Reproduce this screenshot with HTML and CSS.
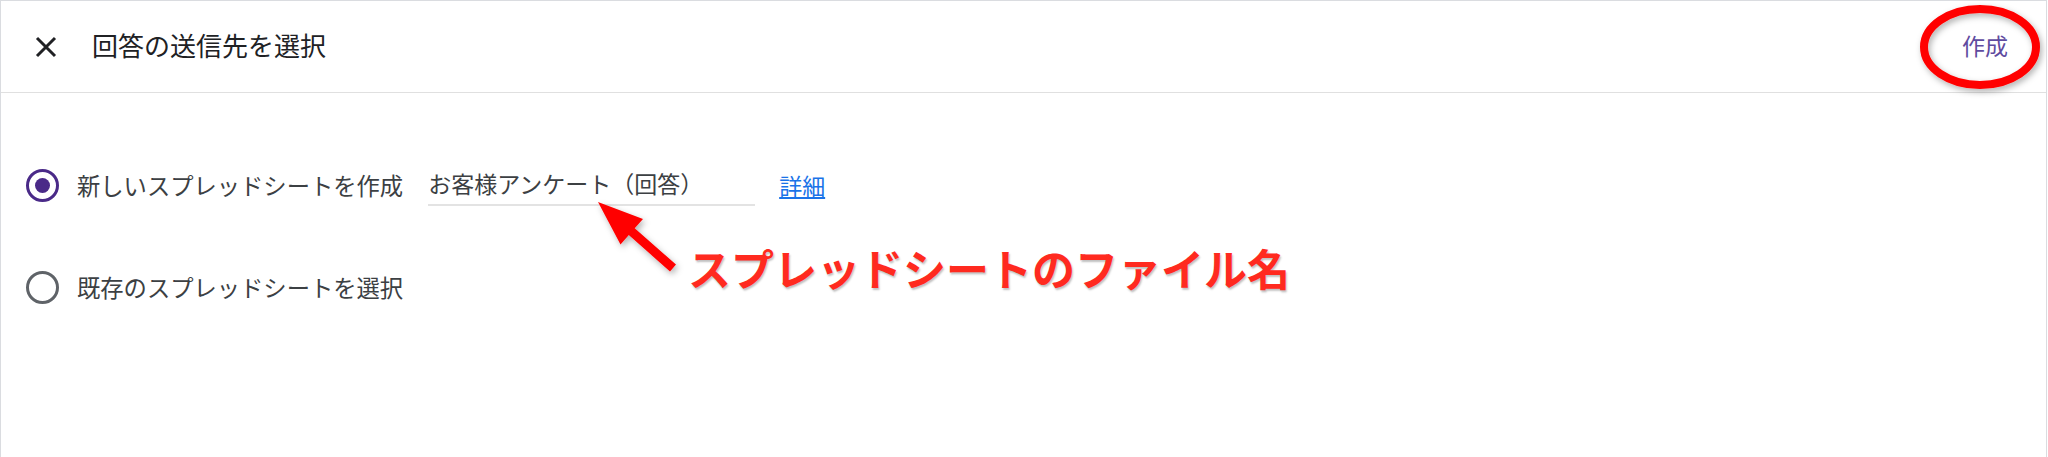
FILE: index.html
```html
<!DOCTYPE html>
<html lang="ja">
<head>
<meta charset="utf-8">
<title>回答の送信先を選択</title>
<link rel="stylesheet" href="styles.css">
</head>
<body>
<div class="dialog">
  <header class="topbar">
    <button class="close" aria-label="閉じる">
      <svg width="22" height="22" viewBox="0 0 22 22"><path d="M2 2L20 20M20 2L2 20" stroke="#202124" stroke-width="3" fill="none"/></svg>
    </button>
    <h1 class="title">回答の送信先を選択</h1>
    <span class="spacer"></span>
    <button class="create">作成</button>
  </header>
  <main class="content">
    <div class="option">
      <span class="radio checked"></span>
      <span class="label">新しいスプレッドシートを作成</span>
      <div class="field">お客様アンケート（回答）</div>
      <a class="link" href="#">詳細</a>
    </div>
    <div class="option second">
      <span class="radio"></span>
      <span class="label">既存のスプレッドシートを選択</span>
    </div>
  </main>
  <p class="note">スプレッドシートのファイル名</p>
  <svg class="overlay" width="2048" height="457" viewBox="0 0 2048 457">
    <defs>
      <filter id="sh" x="-20%" y="-20%" width="140%" height="140%">
        <feDropShadow dx="2" dy="3" stdDeviation="3" flood-color="#000" flood-opacity="0.3"/>
      </filter>
    </defs>
    <ellipse cx="1980" cy="47" rx="56" ry="38" fill="none" stroke="#ff0000" stroke-width="8" filter="url(#sh)"/>
    <polygon points="598,202 643,219 634.7,228.3 676,264.6 670,271.4 628.8,235.1 620.5,244.5" fill="#ff0000" filter="url(#sh)"/>
  </svg>
</div>
</body>
</html>
```
FILE: styles.css
```css
* { box-sizing: border-box; }
html, body { margin: 0; padding: 0; background: #fff; }
body {
  font-family: "Noto Sans CJK JP", "Noto Sans", sans-serif;
  color: #3c4043;
}
.dialog {
  position: relative;
  width: 2047px;
  height: 457px;
  border: 1px solid #dadce0;
  border-bottom: none;
  background: #fff;
  overflow: hidden;
}
.topbar {
  display: flex;
  align-items: center;
  height: 92px;
  padding: 0 38px 0 34px;
  border-bottom: 1px solid #e0e0e0;
}
.close {
  display: flex;
  width: 22px;
  height: 22px;
  padding: 0;
  border: 0;
  background: none;
}
.title {
  margin: 0 0 4px 35px;
  font-size: 26px;
  font-weight: 400;
  line-height: 30px;
  color: #202124;
}
.spacer { flex: 1; }
.create {
  margin-bottom: 4px;
  padding: 0;
  border: 0;
  background: none;
  font-family: inherit;
  font-size: 23px;
  line-height: 30px;
  color: #5f4b9f;
}
.content {
  display: flex;
  flex-direction: column;
  padding: 68px 0 0 25px;
}
.option {
  display: flex;
  align-items: center;
  height: 48px;
}
.option.second { margin-top: 54px; }
.radio {
  display: flex;
  align-items: center;
  justify-content: center;
  width: 33px;
  height: 33px;
  border: 3px solid #5f6368;
  border-radius: 50%;
  flex: none;
}
.radio.checked { border-color: #4a2a88; }
.radio.checked::after {
  content: "";
  width: 15px;
  height: 15px;
  border-radius: 50%;
  background: #4a2a88;
}
.label {
  margin-left: 18px;
  font-size: 23.3px;
  line-height: 24px;
  color: #3c4043;
}
.field {
  width: 327px;
  margin-left: 25px;
  padding: 7px 0 9px;
  font-size: 23px;
  line-height: 24px;
  color: #3c4043;
  border-bottom: 2px solid #e3e3e3;
}
.link {
  margin-left: 24px;
  font-size: 23px;
  line-height: 24px;
  color: #1a73e8;
  text-decoration: underline;
}
.note {
  position: absolute;
  left: 687px;
  top: 245px;
  margin: 0;
  font-size: 43px;
  font-weight: 700;
  line-height: 43px;
  color: #ff2a1f;
  text-shadow: 1px 2px 2px rgba(0, 0, 0, 0.25);
  white-space: nowrap;
}
.overlay {
  position: absolute;
  left: -1px;
  top: -1px;
  pointer-events: none;
}
```
